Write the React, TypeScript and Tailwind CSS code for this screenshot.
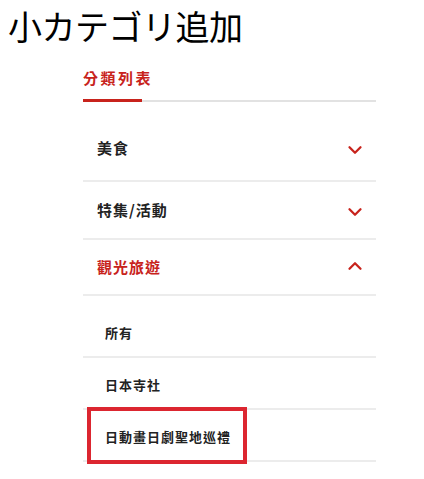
import { ChevronDown, ChevronUp } from "lucide-react";

const font = {
  fontFamily: '"Noto Sans CJK TC", "Noto Sans CJK JP", sans-serif',
};

type Item = { label: string; open?: boolean; h: string };

const groups: Item[] = [
  { label: "美食", h: "h-[60px] pb-[6px]" },
  { label: "特集/活動", h: "h-[58px]" },
  { label: "觀光旅遊", open: true, h: "h-[56px]" },
];

const subs = ["所有", "日本寺社", "日動畫日劇聖地巡禮"];

export default function App() {
  return (
    <div className="w-[424px] h-[479px] bg-white overflow-hidden" style={font}>
      <h1
        className="pl-[8px] pt-[6px] text-[34px] leading-[40px] text-black font-normal tracking-[-0.5px]"
        style={{ fontFamily: '"Noto Sans CJK JP", sans-serif' }}
      >
        小カテゴリ追加
      </h1>

      <div className="ml-[83px] w-[293px]">
        {/* tab header */}
        <div className="pt-[22px] pb-[11px] text-[15px] font-bold tracking-[2.5px] text-[#c8231c] leading-[20px]">
          分類列表
        </div>
        <div className="flex h-[3px] items-center">
          <div className="h-[3px] w-[59px] bg-[#c8231c]" />
          <div className="h-[2px] flex-1 bg-[#e2e2e2]" />
        </div>

        {/* categories */}
        <div className="pt-[20px]">
          {groups.map((g) => (
            <div
              key={g.label}
              className={`flex ${g.h} items-center justify-between border-b-2 border-[#ececec] pl-[14px] pr-[10px]`}
            >
              <span
                className={`text-[15px] font-bold tracking-[1px] ${
                  g.open ? "text-[#c8231c]" : "text-[#222]"
                }`}
              >
                {g.label}
              </span>
              {g.open ? (
                <ChevronUp size={22} strokeWidth={2.5} className="text-[#c8231c] -mt-[2px]" />
              ) : (
                <ChevronDown size={22} strokeWidth={2.5} className="text-[#c8231c] mt-[4px]" />
              )}
            </div>
          ))}

          {/* sub items */}
          <div className="pt-[10px]">
            {subs.map((s, i) => (
              <div
                key={s}
                className="relative flex h-[52px] items-center border-b-2 border-[#ececec] pl-[22px] pt-[4px]"
              >
                <span className="text-[13px] font-bold tracking-[1px] text-[#222]">{s}</span>
                {i === subs.length - 1 && (
                  <div className="absolute left-[4px] top-[-3px] h-[57px] w-[160px] border-4 border-[#dc2630]" />
                )}
              </div>
            ))}
          </div>
        </div>
      </div>
    </div>
  );
}
